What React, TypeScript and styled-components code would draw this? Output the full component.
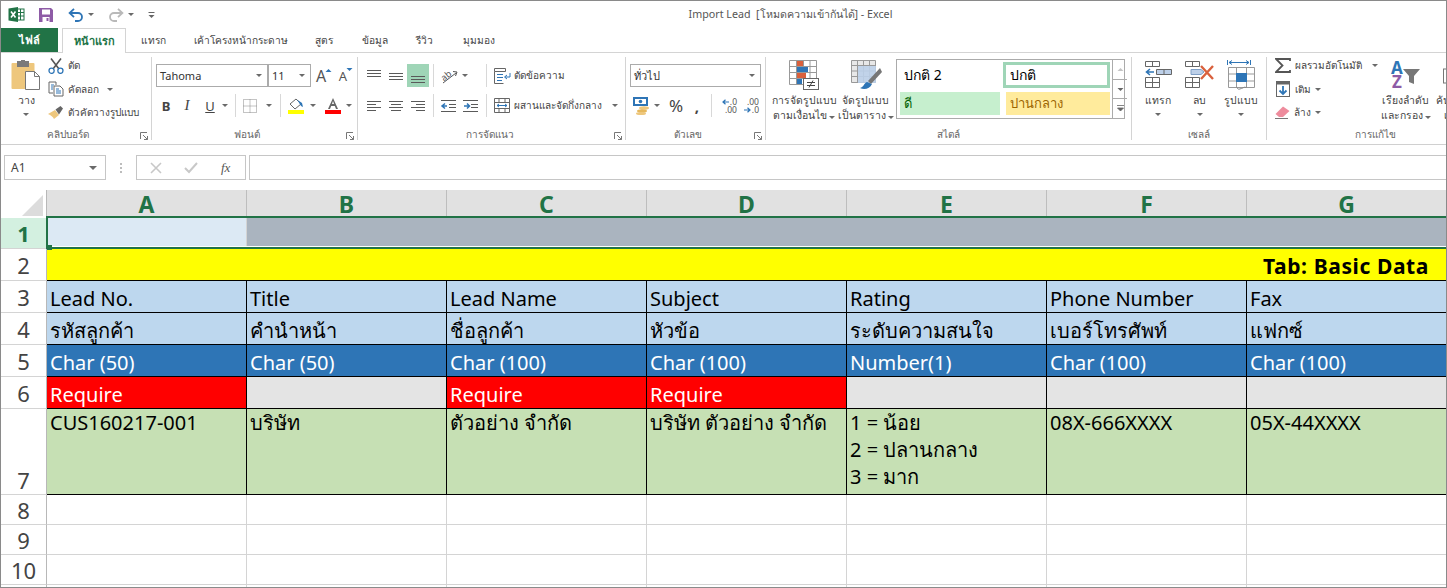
import styled, { createGlobalStyle } from 'styled-components';

const GlobalStyle = createGlobalStyle`
  html, body { margin: 0; padding: 0; background: #fff; }
  * { box-sizing: border-box; }
`

const UI_FONT = `"Noto Sans", "DejaVu Sans", sans-serif`

const Window = styled.div`
  width: 1447px;
  height: 588px;
  overflow: hidden;
  border: 1px solid #8a8a8a;
  font-family: ${UI_FONT};
  color: #444;
  background: #fff;
  display: flex;
  flex-direction: column;
`

const TitleBar = styled.div`
  height: 27px;
  flex: none;
  display: grid;
  grid-template-columns: 1fr auto 1fr;
  align-items: center;
`

const QuickAccess = styled.div`
  display: flex;
  align-items: center;
  padding-left: 7px;
  gap: 4px;
`

const Spacer = styled.span<{ $w: number }>`
  width: ${p => p.$w}px;
  flex: none;
`

const Title = styled.div`
  font-size: 10.7px;
  color: #555;
  margin-left: 134px;
  white-space: pre;
`

const TabRow = styled.div`
  height: 25px;
  flex: none;
  display: flex;
  align-items: stretch;
  border-bottom: 1px solid #d4d4d4;
`

const Tab = styled.div<{ $w: number; $kind?: 'file' | 'active' }>`
  width: ${p => p.$w}px;
  flex: none;
  display: flex;
  align-items: center;
  justify-content: center;
  font-size: ${p => (p.$kind ? 11 : 10.2)}px;
  font-weight: ${p => (p.$kind ? 600 : 400)};
  white-space: nowrap;
  color: ${p => (p.$kind === 'file' ? '#fff' : p.$kind === 'active' ? '#217346' : '#444')};
  background: ${p => (p.$kind === 'file' ? '#217346' : '#fff')};
  margin-right: ${p => (p.$kind === 'file' ? 4 : 0)}px;
  ${p => p.$kind === 'active' && `
    border: 1px solid #d4d4d4;
    border-bottom: none;
    height: 25px;
  `}
`

const Ribbon = styled.div`
  height: 92px;
  flex: none;
  display: flex;
  padding-top: 4px;
  border-bottom: 1px solid #d0d0d0;
  overflow: hidden;
`

const Group = styled.div<{ $w: number; $open?: boolean }>`
  width: ${p => p.$w}px;
  flex: none;
  height: 83px;
  display: flex;
  flex-direction: column;
  border-right: ${p => (p.$open ? 'none' : '1px solid #d4d4d4')};
`

const GroupBody = styled.div<{ $pad?: number }>`
  flex: 1;
  min-height: 0;
  display: flex;
  padding-left: ${p => p.$pad ?? 0}px;
`

const GroupLabel = styled.div<{ $launcher?: boolean; $offset?: number }>`
  height: 9px;
  flex: none;
  display: grid;
  grid-template-columns: ${p => (p.$launcher ? '1fr 16px' : '1fr')};
  align-items: center;
  padding-left: ${p => p.$offset ?? 0}px;
  font-size: 10px;
  line-height: 14px;
  color: #666;
  text-align: center;
  white-space: nowrap;
  & > span {
    margin-top: -4px;
  }
`

const Launcher = styled.svg`
  width: 8px;
  height: 8px;
  justify-self: end;
  margin-right: 3px;
`

const Stack = styled.div<{ $w?: number; $gap?: number; $top?: number; $lift?: number }>`
  ${p => (p.$w ? `width: ${p.$w}px; flex: none;` : '')}
  display: flex;
  flex-direction: column;
  gap: ${p => p.$gap ?? 0}px;
  padding-top: ${p => p.$top ?? 0}px;
  margin-top: ${p => -(p.$lift ?? 0)}px;
`

const Row = styled.div<{ $h?: number; $left?: number }>`
  display: flex;
  align-items: center;
  height: ${p => p.$h ?? 23}px;
  margin-left: ${p => p.$left ?? 0}px;
`

const SmallText = styled.span<{ $left?: number }>`
  font-size: 10px;
  color: #444;
  white-space: nowrap;
  margin-left: ${p => p.$left ?? 4}px;
`

const Caret = styled.span<{ $left?: number; $right?: number; $top?: number; $big?: boolean }>`
  display: inline-block;
  flex: none;
  width: 0;
  height: 0;
  border-left: ${p => (p.$big ? 4 : 3)}px solid transparent;
  border-right: ${p => (p.$big ? 4 : 3)}px solid transparent;
  border-top: ${p => (p.$big ? 4 : 3)}px solid #6a6a6a;
  margin-left: ${p => p.$left ?? 0}px;
  margin-right: ${p => p.$right ?? 0}px;
  margin-top: ${p => p.$top ?? 0}px;
`

const Slot = styled.span<{ $w: number; $on?: boolean; $size?: number; $bold?: boolean; $left?: number }>`
  width: ${p => p.$w}px;
  height: 23px;
  flex: none;
  display: flex;
  align-items: center;
  justify-content: center;
  background: ${p => (p.$on ? '#9fd5b7' : 'transparent')};
  font-size: ${p => p.$size ?? 13}px;
  font-weight: ${p => (p.$bold ? 700 : 400)};
  margin-left: ${p => p.$left ?? 0}px;
  color: #444;
`

const ItalicMark = styled.i`
  font-family: "Liberation Serif", serif;
  font-size: 15px;
`

const GrowMark = styled.span<{ $size: number }>`
  display: flex;
  align-items: flex-start;
  font-size: ${p => p.$size}px;
  line-height: 18px;
  color: #555;
  & > svg {
    margin: 1px 0 0 -1px;
  }
`

const DecimalMark = styled.span`
  width: 20px;
  flex: none;
  display: flex;
  flex-direction: column;
  align-items: flex-end;
  font-size: 8.5px;
  line-height: 8px;
  color: #555;
`

const DecimalLine = styled.span`
  display: flex;
  align-items: center;
  height: 8px;
  gap: 1px;
`

const Divider = styled.span<{ $left?: number; $right?: number }>`
  width: 1px;
  height: 23px;
  flex: none;
  background: #d8d8d8;
  margin-left: ${p => p.$left ?? 0}px;
  margin-right: ${p => p.$right ?? 0}px;
`

const Select = styled.div<{ $w: number }>`
  width: ${p => p.$w}px;
  height: 23px;
  flex: none;
  display: flex;
  align-items: center;
  justify-content: space-between;
  border: 1px solid #ababab;
  padding: 0 5px 0 3px;
  font-size: 11px;
  color: #333;
`

const BigButton = styled.div<{ $w: number; $start?: boolean }>`
  width: ${p => p.$w}px;
  flex: none;
  display: flex;
  flex-direction: column;
  align-items: ${p => (p.$start ? 'flex-start' : 'center')};
  padding-top: 2px;
  padding-left: ${p => (p.$start ? 3 : 0)}px;
`

const BigIcon = styled.div`
  height: 32px;
  display: flex;
  align-items: center;
  justify-content: center;
`

const BigLabel = styled.div`
  margin-top: 2px;
  font-size: 10.4px;
  line-height: 15px;
  color: #444;
  text-align: center;
  white-space: nowrap;
`

const StyleGallery = styled.div`
  width: 229px;
  height: 60px;
  flex: none;
  margin-top: 2px;
  border: 1px solid #ababab;
  display: grid;
  grid-template-columns: 1fr 15px;
`

const StyleCells = styled.div`
  display: grid;
  grid-template-columns: 105px 107px;
  grid-template-rows: 30px 28px;
  padding-left: 3px;
`

const cellMargins = {
  top: '1px 5px 2px 0',
  picked: '2px 2px 2px -2px',
  good: '2px 5px 3px 0',
  neutral: '2px 2px 3px 1px',
}

const StyleCell = styled.div<{ $bg: string; $fg: string; $variant: keyof typeof cellMargins }>`
  margin: ${p => cellMargins[p.$variant]};
  background: ${p => p.$bg};
  color: ${p => p.$fg};
  border: ${p => (p.$variant === 'picked' ? '3px solid #9fd5b7' : 'none')};
  display: flex;
  align-items: center;
  padding-left: 4px;
  font-size: ${p => (p.$variant === 'top' || p.$variant === 'picked' ? 14 : 13)}px;
`

const GalleryScroll = styled.div`
  display: grid;
  grid-template-rows: 20px 19px 19px;
  border-left: 1px solid #ababab;
`

const GalleryButton = styled.div<{ $last?: boolean }>`
  display: flex;
  align-items: center;
  justify-content: center;
  border-bottom: ${p => (p.$last ? 'none' : '1px solid #ababab')};
`

const FormulaBar = styled.div`
  flex: none;
  height: 25px;
  margin: 10px 0 10px 3px;
  display: flex;
  align-items: stretch;
`

const NameBox = styled.div`
  width: 102px;
  flex: none;
  border: 1px solid #c6c6c6;
  display: flex;
  align-items: center;
  justify-content: space-between;
  padding: 0 8px 0 6px;
  font-size: 12px;
  color: #444;
`

const Grip = styled.div`
  width: 30px;
  flex: none;
  display: flex;
  flex-direction: column;
  align-items: center;
  justify-content: center;
  gap: 2px;
  & > i {
    width: 2px;
    height: 2px;
    background: #bdbdbd;
  }
`

const FxBox = styled.div`
  width: 110px;
  flex: none;
  border: 1px solid #c6c6c6;
  display: grid;
  grid-template-columns: repeat(3, 1fr);
  align-items: center;
  justify-items: center;
  padding: 0 2px;
  font-family: "Liberation Serif", serif;
  font-style: italic;
  font-size: 13px;
  color: #555;
`

const FormulaInput = styled.div`
  flex: 1;
  margin-left: 3px;
  border: 1px solid #c6c6c6;
  border-right: none;
`

const Sheet = styled.div`
  position: relative;
  flex: none;
  height: 398px;
  display: grid;
  grid-template-columns: 46px repeat(7, 200px);
  grid-template-rows: 28px 31px 32px 32px 32px 32px 32px 86px 30px 30px 30px 30px;
  overflow: hidden;
`

const Corner = styled.div`
  background: #fff;
  border-right: 1px solid #b8b8b8;
  display: flex;
  align-items: flex-end;
  justify-content: flex-end;
  padding: 0 3px 2px 0;
`

const ColHead = styled.div`
  background: #e1e1e1;
  border-right: 1px solid #bdbdbd;
  display: flex;
  align-items: center;
  justify-content: center;
  font-size: 23px;
  font-weight: 700;
  color: #217346;
`

const RowHead = styled.div<{ $on?: boolean; $end?: boolean }>`
  background: ${p => (p.$on ? '#d3f0e0' : '#fff')};
  border-right: 1px solid #b8b8b8;
  border-bottom: 1px solid #d4d4d4;
  display: flex;
  align-items: ${p => (p.$end ? 'flex-end' : 'center')};
  justify-content: center;
  font-size: 22px;
  line-height: 28px;
  font-weight: ${p => (p.$on ? 700 : 400)};
  color: ${p => (p.$on ? '#217346' : '#444')};
`

const Cell = styled.div<{ $bg?: string; $fg?: string; $top?: boolean; $span?: number; $banner?: boolean; $plain?: boolean }>`
  grid-column: span ${p => p.$span ?? 1};
  background: ${p => p.$bg ?? '#fff'};
  color: ${p => p.$fg ?? '#000'};
  border-right: 1px solid ${p => (p.$plain ? '#d4d4d4' : '#000')};
  border-bottom: 1px solid ${p => (p.$plain ? '#d4d4d4' : '#000')};
  padding: ${p => (p.$top ? '0' : '3px')} ${p => (p.$banner ? '17px' : '3px')} 0 3px;
  display: flex;
  flex-direction: column;
  justify-content: ${p => (p.$top ? 'flex-start' : 'center')};
  align-items: ${p => (p.$banner ? 'flex-end' : 'flex-start')};
  font-size: ${p => (p.$banner ? 21 : 20)}px;
  letter-spacing: ${p => (p.$banner ? 0.6 : 0)}px;
  line-height: 27px;
  font-weight: ${p => (p.$banner ? 700 : 400)};
  white-space: nowrap;
  overflow: hidden;
`

const SelectionBox = styled.div`
  position: absolute;
  left: 45px;
  top: 26px;
  right: 0;
  height: 33px;
  border: 2px solid #217346;
  border-right: none;
  box-shadow: inset 0 -1px 0 #fff;
  pointer-events: none;
`

const FillHandle = styled.div`
  position: absolute;
  left: -1px;
  bottom: -3px;
  width: 5px;
  height: 5px;
  background: #217346;
`

const ExcelLogo = () => (
  <svg width="17" height="17" viewBox="0 0 17 17">
    <rect x="6" y="3" width="10" height="11" fill="#fff" stroke="#217346" />
    <path d="M9 3v11M12.5 3v11M6 6.500h10M6 10h10" stroke="#217346" strokeWidth="1" />
    <path d="M0.500 2.500 10 1v15l-9.500-1.500z" fill="#217346" />
    <path d="M3 5.500 7.500 11.500M7.500 5.500 3 11.500" stroke="#fff" strokeWidth="1.600" />
  </svg>
)

const SaveIcon = () => (
  <svg width="16" height="16" viewBox="0 0 16 16" style={{ marginLeft: 9 }}>
    <path d="M1 1h12l2 2v12H1z" fill="#8e5ba6" />
    <rect x="4" y="2.500" width="8" height="5" fill="#fff" />
    <rect x="4.500" y="10" width="7" height="5" fill="#fff" />
    <rect x="8.500" y="11" width="2" height="3" fill="#8e5ba6" />
  </svg>
)

const UndoIcon = () => (
  <svg width="16" height="14" viewBox="0 0 16 14">
    <path d="M2.500 5h7.500a3.500 3.500 0 0 1 0 8H7" fill="none" stroke="#2e75b6" strokeWidth="1.800" />
    <path d="M6 0.800 1.600 5 6 9.200" fill="none" stroke="#2e75b6" strokeWidth="1.800" />
  </svg>
)

const RedoIcon = () => (
  <svg width="16" height="14" viewBox="0 0 16 14">
    <path d="M13.500 5H6a3.500 3.500 0 0 0 0 8h3" fill="none" stroke="#b9b9b9" strokeWidth="1.800" />
    <path d="M10 0.800 14.400 5 10 9.200" fill="none" stroke="#b9b9b9" strokeWidth="1.800" />
  </svg>
)

const CustomizeIcon = () => (
  <svg width="7" height="8" viewBox="0 0 7 8">
    <path d="M0.500 1.500h6" stroke="#666" />
    <path d="M0.500 4h6l-3 3z" fill="#666" />
  </svg>
)

const PasteIcon = () => (
  <svg width="30" height="30" viewBox="0 0 30 30">
    <rect x="0.500" y="3" width="23" height="26" rx="1" fill="#eec77d" />
    <rect x="6" y="1" width="12" height="6" fill="#7a7a7a" />
    <rect x="10" y="0" width="4" height="3" fill="#7a7a7a" />
    <path d="M14.500 11.500h9l5 5v13h-14z" fill="#fff" stroke="#777" />
    <path d="M23.500 11.500v5h5" fill="none" stroke="#777" />
  </svg>
)

const ScissorsIcon = () => (
  <svg width="16" height="16" viewBox="0 0 16 16">
    <path d="M3 0.500 11 11M13 0.500 5 11" stroke="#555" strokeWidth="1.600" />
    <circle cx="3.600" cy="12.800" r="2.600" fill="none" stroke="#2e75b6" strokeWidth="1.300" />
    <circle cx="12.400" cy="12.800" r="2.600" fill="none" stroke="#2e75b6" strokeWidth="1.300" />
  </svg>
)

const CopyIcon = () => (
  <svg width="16" height="16" viewBox="0 0 16 16">
    <path d="M1 1h7v3M1 1v11h4" fill="none" stroke="#666" />
    <path d="M6 5h6l3 3v7H6z" fill="#fff" stroke="#666" />
    <path d="M8 8h3M8 10h5M8 12h5M3 4h3M3 6h2M3 8h2" stroke="#2e75b6" />
  </svg>
)

const BrushIcon = () => (
  <svg width="16" height="13" viewBox="0 0 16 13">
    <path d="M0 8 7 4l4 5-5 4C5 11 3 9 0 8z" fill="#eec77d" />
    <path d="M7.500 3.500 12.500 0 15 2.500 11 8.500z" fill="#666" />
  </svg>
)

const LauncherIcon = () => (
  <Launcher viewBox="0 0 8 8">
    <path d="M0.500 7V0.500H7M3 3l4.500 4.500M7.500 4v3.500H4" fill="none" stroke="#777" />
  </Launcher>
)

const Lines = ({ rows }: { rows: Array<[number, number, number]> }) => (
  <svg width="16" height="16" viewBox="0 0 16 16">
    {rows.map(([x1, x2, y], i) => <path key={i} d={`M${x1} ${y}.5H${x2}`} stroke="#5a5a5a" />)}
  </svg>
)

const GrowArrow = ({ up }: { up: boolean }) => (
  <svg width="7" height="4" viewBox="0 0 7 4">
    <path d={up ? 'M0.500 4h6l-3-3z' : 'M0.500 0h6l-3 3z'} fill="#2e75b6" />
  </svg>
)

const BorderIcon = () => (
  <svg width="14" height="14" viewBox="0 0 14 14">
    <path d="M0.500 0.500h13v13h-13zM7 0.500v13M0.500 7h13" fill="none" stroke="#888" strokeDasharray="1 1" />
  </svg>
)

const FillIcon = () => (
  <svg width="17" height="16" viewBox="0 0 17 16">
    <path d="M2 6 8 1l5 5-6 5z" fill="#fff" stroke="#666" />
    <path d="M9 1.500 14 5l1 4-2-1z" fill="#2e75b6" />
    <rect x="0" y="12" width="16" height="4" fill="#ffff00" />
  </svg>
)

const FontColorIcon = () => (
  <svg width="16" height="16" viewBox="0 0 16 16">
    <path fillRule="evenodd" d="M3 11 8 0l5 11h-2L9.800 8H6.200L5 11zM7 6h2L8 3z" fill="#666" />
    <rect x="0" y="12" width="16" height="4" fill="#ff0000" />
  </svg>
)

const OrientIcon = () => (
  <svg width="18" height="16" viewBox="0 0 18 16" style={{ overflow: 'visible' }}>
    <text x="1" y="11" fontSize="9" fontFamily="Noto Sans" fill="#555" transform="rotate(-40 6 8)">ab</text>
    <path d="M3 15 16 5" stroke="#555" />
    <path d="M13 3.500 17 4l-1.500 4" fill="none" stroke="#555" />
  </svg>
)

const IndentIcon = ({ flip }: { flip?: boolean }) => (
  <svg width="16" height="14" viewBox="0 0 16 14">
    <path d={flip ? 'M0 1.500h15M8 5.500h7M8 8.500h7M0 12.500h15' : 'M1 1.500h15M9 5.500h7M9 8.500h7M1 12.500h15'} stroke="#5a5a5a" />
    <path d={flip ? 'M1 7h5M4 4.500 6.500 7 4 9.500' : 'M7 7H2M5 4.500 2 7l3 2.500'} fill="none" stroke="#2e75b6" strokeWidth="1.500" />
  </svg>
)

const WrapIcon = () => (
  <svg width="17" height="16" viewBox="0 0 17 16">
    <path d="M0.500 0.500h11v3h-11zM0.500 3.500v12h9" fill="none" stroke="#666" />
    <path d="M3 6.500h6M3 9.500h6M3 12.500h5" stroke="#2e75b6" />
    <path d="M16 5v4h-5M13 7l-2.500 2 2.500 2" fill="none" stroke="#2e75b6" />
  </svg>
)

const MergeIcon = () => (
  <svg width="16" height="15" viewBox="0 0 16 15">
    <path d="M0.500 0.500h15v14h-15zM0.500 4.500h15M0.500 10.500h15M5 0.500v4M11 0.500v4M5 10.500v4M11 10.500v4" fill="none" stroke="#666" />
    <path d="M3 7.500h10M5 6 3 7.500 5 9M11 6l2 1.500L11 9" fill="none" stroke="#2e75b6" />
  </svg>
)

const CurrencyIcon = () => (
  <svg width="17" height="18" viewBox="0 0 17 18">
    <rect x="0" y="0" width="15" height="9" fill="#2e75b6" />
    <rect x="2" y="2" width="11" height="5" fill="#fff" />
    <circle cx="7.500" cy="4.500" r="1.800" fill="#2e75b6" />
    <ellipse cx="11" cy="11" rx="5" ry="1.800" fill="#eec77d" />
    <ellipse cx="9" cy="14" rx="5" ry="1.800" fill="#e6b85c" />
    <ellipse cx="8" cy="16.500" rx="5" ry="1.500" fill="#eec77d" />
  </svg>
)

const DecimalArrow = ({ right }: { right?: boolean }) => (
  <svg width="7" height="6" viewBox="0 0 7 6">
    <path d={right ? 'M0 3h6M3.500 0.800 6 3 3.500 5.200' : 'M7 3H1M3.500 0.800 1 3l2.500 2.200'} fill="none" stroke="#2e75b6" strokeWidth="1.200" />
  </svg>
)

const ConditionalIcon = () => (
  <svg width="31" height="31" viewBox="0 0 31 31">
    <path d="M0.500 0.500h27v24h-27zM0.500 6.500h27M0.500 12.500h27M0.500 18.500h27M7.500 0.500v24M14.500 0.500v24M21 0.500v24" fill="#fff" stroke="#999" />
    <rect x="8" y="1" width="6" height="5" fill="#d9603c" />
    <rect x="8" y="7" width="11" height="5" fill="#2e75b6" />
    <rect x="8" y="13" width="9" height="5" fill="#d9603c" />
    <rect x="8" y="19" width="5" height="5" fill="#2e75b6" />
    <rect x="14.500" y="18.500" width="15" height="11" fill="#fff" stroke="#666" />
    <path d="M18 22.500h8M18 25.500h8M24 20.500l-4 7" stroke="#444" />
  </svg>
)

const TableIcon = () => (
  <svg width="31" height="31" viewBox="0 0 31 31">
    <path d="M0.500 0.500h24v22h-24zM0.500 5.500h24M0.500 11h24M0.500 16.500h24M6.500 0.500v22M12.500 0.500v22M18.500 0.500v22" fill="#e8e8e8" stroke="#999" />
    <path d="M7 6h18v17H7z" fill="#bdd0e9" opacity="0.9" />
    <path d="M29 8 17 21l3 3L31 12z" fill="#777" />
    <path d="M16 22c-3 1-3 5-7 6 4 2 10 1 12-4z" fill="#2e75b6" />
  </svg>
)

const InsertIcon = () => (
  <svg width="27" height="28" viewBox="0 0 27 28">
    <path d="M0.500 0.500h14v5h-14zM7.500 0.500v5M0.500 16.500h14v10h-14zM7.500 16.500v10M0.500 21.500h14" fill="#fff" stroke="#666" />
    <path d="M11.500 8.500h15v5h-15zM19 8.500v5" fill="#bdd0e9" stroke="#666" />
    <path d="M9 11H2M5 8 1.500 11 5 14" fill="none" stroke="#2e75b6" strokeWidth="1.600" />
  </svg>
)

const DeleteIcon = () => (
  <svg width="30" height="28" viewBox="0 0 30 28">
    <path d="M0.500 0.500h14v5h-14zM7.500 0.500v5M0.500 16.500h14v10h-14zM7.500 16.500v10M0.500 21.500h14" fill="#fff" stroke="#666" />
    <path d="M6 8.500h10l3 2.500-3 2.500H6z" fill="#bdd0e9" stroke="#7f9fc6" />
    <path d="M16 5 28 18M28 5 16 18" stroke="#d9603c" strokeWidth="2.400" />
  </svg>
)

const FormatIcon = () => (
  <svg width="28" height="33" viewBox="0 0 28 33">
    <path d="M0.500 1v5M23.500 1v5M2 3.500h20M5 1.500 2 3.500l3 2M19 1.500l3 2-3 2" fill="none" stroke="#2e75b6" />
    <path d="M1.500 8.500h26v20h-26zM1.500 15h26M1.500 22h26M9.500 8.500v20M19.500 8.500v20" fill="#fff" stroke="#999" />
    <rect x="9" y="14" width="11" height="9" fill="#2e75b6" />
    <path d="M9.500 28.500q2 3 5 1t5-1" fill="none" stroke="#888" />
  </svg>
)

const SigmaIcon = () => (
  <svg width="16" height="15" viewBox="0 0 16 15">
    <path d="M15 3V1H1l6.500 6.500L1 14h14v-2" fill="none" stroke="#555" strokeWidth="1.800" />
  </svg>
)

const FillDownIcon = () => (
  <svg width="14" height="16" viewBox="0 0 14 16">
    <rect x="0.500" y="0.500" width="13" height="15" fill="#fff" stroke="#666" />
    <rect x="0.500" y="0.500" width="13" height="3" fill="#666" />
    <path d="M7 5v8M3.500 9.500 7 13l3.500-3.500" fill="none" stroke="#2e75b6" strokeWidth="1.800" />
  </svg>
)

const EraserIcon = () => (
  <svg width="16" height="13" viewBox="0 0 16 13">
    <path d="M0.500 8 8 0.500 14.500 5 8 11H4z" fill="#ee8c9d" />
    <path d="M0 12.500h13" stroke="#777" />
  </svg>
)

const SortIcon = () => (
  <svg width="30" height="28" viewBox="0 0 30 28" style={{ overflow: 'visible' }}>
    <text x="0" y="13" fontSize="17" fontWeight="700" fontFamily="Noto Sans" fill="#2e75b6">A</text>
    <text x="1" y="27" fontSize="17" fontWeight="700" fontFamily="Noto Sans" fill="#8e5ba6">Z</text>
    <path d="M12 8h17l-6 7v8l-5-2v-6z" fill="#777" />
  </svg>
)

const FindIcon = () => (
  <svg width="10" height="28" viewBox="0 0 10 28" style={{ marginLeft: 7 }}>
    <rect x="0.500" y="8" width="5" height="14" fill="none" stroke="#777" />
  </svg>
)

const GalleryArrow = ({ kind }: { kind: 'up' | 'down' | 'more' }) => (
  <svg width="9" height="9" viewBox="0 0 9 9">
    {kind === 'up' && <path d="M1.500 6h6l-3-3z" fill="#c4c4c4" />}
    {kind === 'down' && <path d="M1.500 3h6l-3 3z" fill="#666" />}
    {kind === 'more' && <path d="M1 1.500h7M1.500 4h6l-3 3z" stroke="#666" strokeWidth="0.800" fill="#666" />}
  </svg>
)

const columns = ['A', 'B', 'C', 'D', 'E', 'F', 'G']

const sheetRows: Array<{ num: number; cells: string[]; bg?: string; fg?: string }> = [
  { num: 3, cells: ['Lead No.', 'Title', 'Lead Name', 'Subject', 'Rating', 'Phone Number', 'Fax'], bg: '#bdd7ee' },
  { num: 4, cells: ['รหัสลูกค้า', 'คำนำหน้า', 'ชื่อลูกค้า', 'หัวข้อ', 'ระดับความสนใจ', 'เบอร์โทรศัพท์', 'แฟกซ์'], bg: '#bdd7ee' },
  { num: 5, cells: ['Char (50)', 'Char (50)', 'Char (100)', 'Char (100)', 'Number(1)', 'Char (100)', 'Char (100)'], bg: '#2e75b6', fg: '#fff' },
]

const requireRow = ['Require', '', 'Require', 'Require', '', '', '']

const sampleRow = [
  ['CUS160217-001'],
  ['บริษัท'],
  ['ตัวอย่าง จำกัด'],
  ['บริษัท ตัวอย่าง จำกัด'],
  ['1 = น้อย', '2 = ปลานกลาง', '3 = มาก'],
  ['08X-666XXXX'],
  ['05X-44XXXX'],
]

const GroupFooter = ({ label, launcher, offset }: { label: string; launcher?: boolean; offset?: number }) => (
  <GroupLabel $launcher={launcher} $offset={offset}>
    <span>{label}</span>
    {launcher && <LauncherIcon />}
  </GroupLabel>
)

const SheetRow = ({ num, cells, bg, fg, plain }: { num: number; cells: string[]; bg?: string; fg?: string; plain?: boolean }) => (
  <>
    <RowHead>{num}</RowHead>
    {cells.map((text, i) => <Cell key={i} $bg={bg} $fg={fg} $plain={plain}>{text}</Cell>)}
  </>
)

const App = () => (
  <Window>
    <GlobalStyle />
    <TitleBar>
      <QuickAccess>
        <ExcelLogo />
        <SaveIcon />
        <Spacer $w={6} />
        <UndoIcon />
        <Caret />
        <Spacer $w={6} />
        <RedoIcon />
        <Caret />
        <Spacer $w={6} />
        <CustomizeIcon />
      </QuickAccess>
      <Title>Import Lead  [โหมดความเข้ากันได้] - Excel</Title>
      <span />
    </TitleBar>

    <TabRow>
      <Tab $w={57} $kind="file">ไฟล์</Tab>
      <Tab $w={64} $kind="active">หน้าแรก</Tab>
      <Tab $w={54}>แทรก</Tab>
      <Tab $w={121}>เค้าโครงหน้ากระดาษ</Tab>
      <Tab $w={46}>สูตร</Tab>
      <Tab $w={56}>ข้อมูล</Tab>
      <Tab $w={43}>รีวิว</Tab>
      <Tab $w={65}>มุมมอง</Tab>
    </TabRow>

    <Ribbon>
      <Group $w={151}>
        <GroupBody $pad={9}>
          <BigButton $w={32}>
            <BigIcon><PasteIcon /></BigIcon>
            <BigLabel>วาง</BigLabel>
            <Caret $top={5} />
          </BigButton>
          <Stack $lift={3} style={{ marginLeft: 6 }}>
            <Row $h={23.5}><ScissorsIcon /><SmallText>ตัด</SmallText></Row>
            <Row $h={23.5}><CopyIcon /><SmallText>คัดลอก</SmallText><Caret $left={8} /></Row>
            <Row $h={23.5}><BrushIcon /><SmallText>ตัวคัดวางรูปแบบ</SmallText></Row>
          </Stack>
        </GroupBody>
        <GroupFooter label="คลิปบอร์ด" launcher />
      </Group>

      <Group $w={206}>
        <GroupBody $pad={4}>
          <Stack $top={7} $gap={7}>
            <Row>
              <Select $w={112}><span>Tahoma</span><Caret /></Select>
              <Select $w={43}><span>11</span><Caret /></Select>
              <Slot $w={22} $left={2}><GrowMark $size={16}>A<GrowArrow up /></GrowMark></Slot>
              <Slot $w={22}><GrowMark $size={13}>A<GrowArrow up={false} /></GrowMark></Slot>
            </Row>
            <Row>
              <Slot $w={20} $bold>B</Slot>
              <Slot $w={22}><ItalicMark>I</ItalicMark></Slot>
              <Slot $w={24}><u>U</u></Slot>
              <Caret $right={7} />
              <Divider $right={7} />
              <BorderIcon />
              <Caret $left={9} $right={8} />
              <Divider $right={7} />
              <FillIcon />
              <Caret $left={5} $right={9} />
              <FontColorIcon />
              <Caret $left={5} />
            </Row>
          </Stack>
        </GroupBody>
        <GroupFooter label="ฟอนต์" launcher />
      </Group>

      <Group $w={268}>
        <GroupBody $pad={5}>
          <Stack $top={7} $gap={7}>
            <Row>
              <Slot $w={22}><Lines rows={[[1, 15, 2], [1, 15, 5], [1, 15, 8]]} /></Slot>
              <Slot $w={22}><Lines rows={[[1, 15, 5], [1, 15, 8], [1, 15, 11]]} /></Slot>
              <Slot $w={22} $on><Lines rows={[[1, 15, 8], [1, 15, 11], [1, 15, 14]]} /></Slot>
              <Divider $left={4} $right={6} />
              <OrientIcon />
              <Caret $left={4} $right={18} />
              <Divider $right={7} />
              <WrapIcon />
              <SmallText $left={3}>ตัดข้อความ</SmallText>
            </Row>
            <Row>
              <Slot $w={22}><Lines rows={[[1, 15, 3], [1, 10, 6], [1, 15, 9], [1, 10, 12]]} /></Slot>
              <Slot $w={22}><Lines rows={[[1, 15, 3], [3, 13, 6], [1, 15, 9], [3, 13, 12]]} /></Slot>
              <Slot $w={22}><Lines rows={[[1, 15, 3], [6, 15, 6], [1, 15, 9], [6, 15, 12]]} /></Slot>
              <Divider $left={4} $right={6} />
              <IndentIcon />
              <Spacer $w={7} />
              <IndentIcon flip />
              <Spacer $w={7} />
              <Divider $right={7} />
              <MergeIcon />
              <SmallText $left={4}>ผสานและจัดกึ่งกลาง</SmallText>
              <Caret $left={10} />
            </Row>
          </Stack>
        </GroupBody>
        <GroupFooter label="การจัดแนว" launcher offset={13} />
      </Group>

      <Group $w={140}>
        <GroupBody $pad={4}>
          <Stack $top={7} $gap={7}>
            <Select $w={131}><span>ทั่วไป</span><Caret /></Select>
            <Row $left={3}>
              <CurrencyIcon />
              <Caret $left={4} $right={4} />
              <Slot $w={24} $size={17}>%</Slot>
              <Slot $w={18} $size={15} $bold>,</Slot>
              <Divider $left={5} $right={5} />
              <DecimalMark>
                <DecimalLine><DecimalArrow />.0</DecimalLine>
                <DecimalLine>.00</DecimalLine>
              </DecimalMark>
              <Spacer $w={2} />
              <DecimalMark>
                <DecimalLine>.00</DecimalLine>
                <DecimalLine><DecimalArrow right />.0</DecimalLine>
              </DecimalMark>
            </Row>
          </Stack>
        </GroupBody>
        <GroupFooter label="ตัวเลข" launcher />
      </Group>

      <Group $w={366}>
        <GroupBody $pad={6}>
          <BigButton $w={64}>
            <BigIcon><ConditionalIcon /></BigIcon>
            <BigLabel>การจัดรูปแบบ<br />ตามเงื่อนไข <Caret /></BigLabel>
          </BigButton>
          <BigButton $w={60}>
            <BigIcon><TableIcon /></BigIcon>
            <BigLabel>จัดรูปแบบ<br />เป็นตาราง <Caret /></BigLabel>
          </BigButton>
          <StyleGallery>
            <StyleCells>
              <StyleCell $bg="#fff" $fg="#000" $variant="top">ปกติ 2</StyleCell>
              <StyleCell $bg="#fff" $fg="#000" $variant="picked">ปกติ</StyleCell>
              <StyleCell $bg="#c6efce" $fg="#006100" $variant="good">ดี</StyleCell>
              <StyleCell $bg="#ffeb9c" $fg="#9c6500" $variant="neutral">ปานกลาง</StyleCell>
            </StyleCells>
            <GalleryScroll>
              <GalleryButton><GalleryArrow kind="up" /></GalleryButton>
              <GalleryButton><GalleryArrow kind="down" /></GalleryButton>
              <GalleryButton $last><GalleryArrow kind="more" /></GalleryButton>
            </GalleryScroll>
          </StyleGallery>
        </GroupBody>
        <GroupFooter label="สไตล์" />
      </Group>

      <Group $w={135}>
        <GroupBody $pad={5}>
          <BigButton $w={42}>
            <BigIcon><InsertIcon /></BigIcon>
            <BigLabel>แทรก</BigLabel>
            <Caret $top={5} />
          </BigButton>
          <BigButton $w={41}>
            <BigIcon><DeleteIcon /></BigIcon>
            <BigLabel>ลบ</BigLabel>
            <Caret $top={5} />
          </BigButton>
          <BigButton $w={42}>
            <BigIcon><FormatIcon /></BigIcon>
            <BigLabel>รูปแบบ</BigLabel>
            <Caret $top={5} />
          </BigButton>
        </GroupBody>
        <GroupFooter label="เซลล์" />
      </Group>

      <Group $w={180} $open>
        <GroupBody $pad={8}>
          <Stack $w={104} $lift={3}>
            <Row $h={23.5}><SigmaIcon /><SmallText $left={4}>ผลรวมอัตโนมัติ</SmallText><Caret $left={10} /></Row>
            <Row $h={23.5} $left={1}><FillDownIcon /><SmallText $left={5}>เติม</SmallText><Caret $left={4} /></Row>
            <Row $h={23.5}><EraserIcon /><SmallText $left={3}>ล้าง</SmallText><Caret $left={4} /></Row>
          </Stack>
          <BigButton $w={54}>
            <BigIcon><SortIcon /></BigIcon>
            <BigLabel>เรียงลำดับ<br />และกรอง <Caret /></BigLabel>
          </BigButton>
          <BigButton $w={30} $start>
            <BigIcon><FindIcon /></BigIcon>
            <BigLabel>ค้นหาและ<br />เลือก <Caret /></BigLabel>
          </BigButton>
        </GroupBody>
        <GroupFooter label="การแก้ไข" offset={37} />
      </Group>
    </Ribbon>

    <FormulaBar>
      <NameBox><span>A1</span><Caret $big /></NameBox>
      <Grip><i /><i /><i /></Grip>
      <FxBox>
        <svg width="12" height="12" viewBox="0 0 12 12"><path d="M1 1l10 10M11 1 1 11" stroke="#c8c8c8" strokeWidth="1.600" /></svg>
        <svg width="14" height="12" viewBox="0 0 14 12"><path d="M1 6l4 4 8-9" fill="none" stroke="#c8c8c8" strokeWidth="2" /></svg>
        <span>fx</span>
      </FxBox>
      <FormulaInput />
    </FormulaBar>

    <Sheet>
      <Corner>
        <svg width="21" height="21" viewBox="0 0 21 21"><path d="M21 0v21H0z" fill="#dcdcdc" /></svg>
      </Corner>
      {columns.map(c => <ColHead key={c}>{c}</ColHead>)}

      <RowHead $on>1</RowHead>
      <Cell $bg="#dce9f4" $plain />
      <Cell $bg="#aab4bf" $plain $span={6} />

      <RowHead>2</RowHead>
      <Cell $bg="#ffff00" $span={7} $banner>Tab: Basic Data</Cell>

      {sheetRows.map(row => (
        <SheetRow key={row.num} num={row.num} cells={row.cells} bg={row.bg} fg={row.fg} />
      ))}

      <RowHead>6</RowHead>
      {requireRow.map((text, i) => (
        <Cell key={i} $bg={text ? '#ff0000' : '#e4e4e4'} $fg="#fff">{text}</Cell>
      ))}

      <RowHead $end>7</RowHead>
      {sampleRow.map((lines, i) => (
        <Cell key={i} $bg="#c6e0b4" $top>
          {lines.map(line => <span key={line}>{line}</span>)}
        </Cell>
      ))}

      {[8, 9, 10, 11].map(n => (
        <SheetRow key={n} num={n} cells={['', '', '', '', '', '', '']} plain />
      ))}

      <SelectionBox><FillHandle /></SelectionBox>
    </Sheet>
  </Window>
)

export default App;
